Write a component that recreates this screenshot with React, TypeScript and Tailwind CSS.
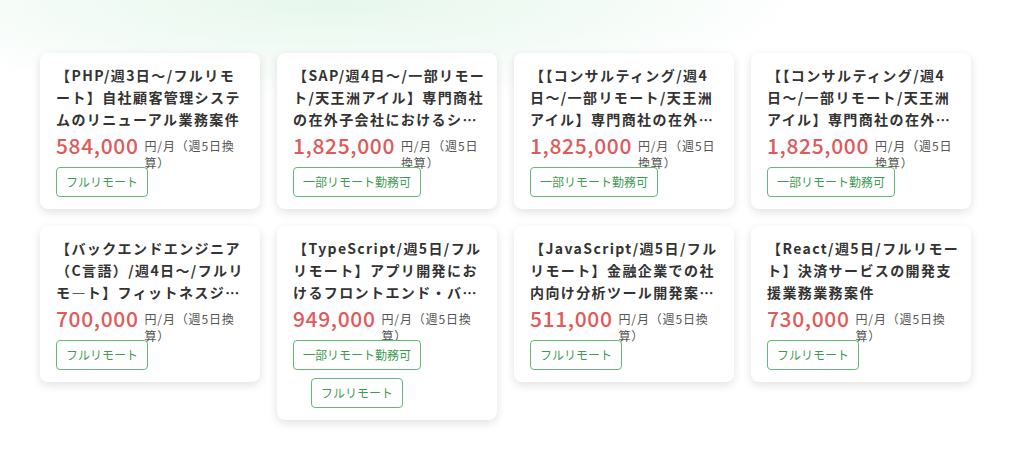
type Job = {
  title: string;
  price: string;
  tags: string[];
};

const jobs: Job[] = [
  {
    title: "【PHP/週3日～/フルリモート】自社顧客管理システムのリニューアル業務案件",
    price: "584,000",
    tags: ["フルリモート"],
  },
  {
    title: "【SAP/週4日～/一部リモート/天王洲アイル】専門商社の在外子会社におけるシステム導入支援",
    price: "1,825,000",
    tags: ["一部リモート勤務可"],
  },
  {
    title: "【【コンサルティング/週4日～/一部リモート/天王洲アイル】専門商社の在外子会社支援",
    price: "1,825,000",
    tags: ["一部リモート勤務可"],
  },
  {
    title: "【【コンサルティング/週4日～/一部リモート/天王洲アイル】専門商社の在外子会社支援",
    price: "1,825,000",
    tags: ["一部リモート勤務可"],
  },
  {
    title: "【バックエンドエンジニア（C言語）/週4日～/フルリモ―ト】フィットネスジム向けシステム開発",
    price: "700,000",
    tags: ["フルリモート"],
  },
  {
    title: "【TypeScript/週5日/フルリモート】アプリ開発におけるフロントエンド・バックエンド開発",
    price: "949,000",
    tags: ["一部リモート勤務可", "フルリモート"],
  },
  {
    title: "【JavaScript/週5日/フルリモート】金融企業での社内向け分析ツール開発案件の募集",
    price: "511,000",
    tags: ["フルリモート"],
  },
  {
    title: "【React/週5日/フルリモート】決済サービスの開発支援業務業務案件",
    price: "730,000",
    tags: ["フルリモート"],
  },
];

const JobCard = ({ job }: { job: Job }) => {
  return (
    <div className="bg-white rounded-lg shadow-[0_3px_10px_rgba(0,0,0,0.12)] pl-4 pr-[11px] pt-[11px] pb-3">
      <h3 className="text-[14px] font-bold leading-[22px] tracking-[0.1em] text-[#333] line-clamp-3">
        {job.title}
      </h3>
      <div className="flex items-start h-[36px] mt-[1px]">
        <span className="text-[21px] leading-[28px] font-medium tracking-[0.03em] text-[#e05a5a] shrink-0">
          {job.price}
        </span>
        <span className="ml-[6px] mt-[6px] text-[12px] leading-[17px] tracking-[0.07em] text-[#555] [text-spacing-trim:space-all]">
          円/月（週5日換算）
        </span>
      </div>
      <div className="inline-flex flex-col items-center gap-2">
        {job.tags.map((tag) => (
          <span
            key={tag}
            className="h-[30px] px-[9px] flex items-center rounded-[4px] border border-[#63b87a] text-[12px] text-[#3f9a55] bg-white"
          >
            {tag}
          </span>
        ))}
      </div>
    </div>
  );
};

const App = () => {
  return (
    <div
      className="w-[1024px] h-[460px] overflow-hidden bg-[radial-gradient(ellipse_480px_100px_at_330px_0px,#e6f7ec_0%,#f3fbf6_55%,#ffffff_100%)]"
      style={{ fontFamily: '"Noto Sans CJK JP", "Noto Sans", sans-serif' }}
    >
      <div className="grid grid-cols-[repeat(4,220px)] gap-[17px] items-start pl-10 pt-[53px]">
        {jobs.map((job, i) => (
          <JobCard key={i} job={job} />
        ))}
      </div>
    </div>
  );
};

export default App;
